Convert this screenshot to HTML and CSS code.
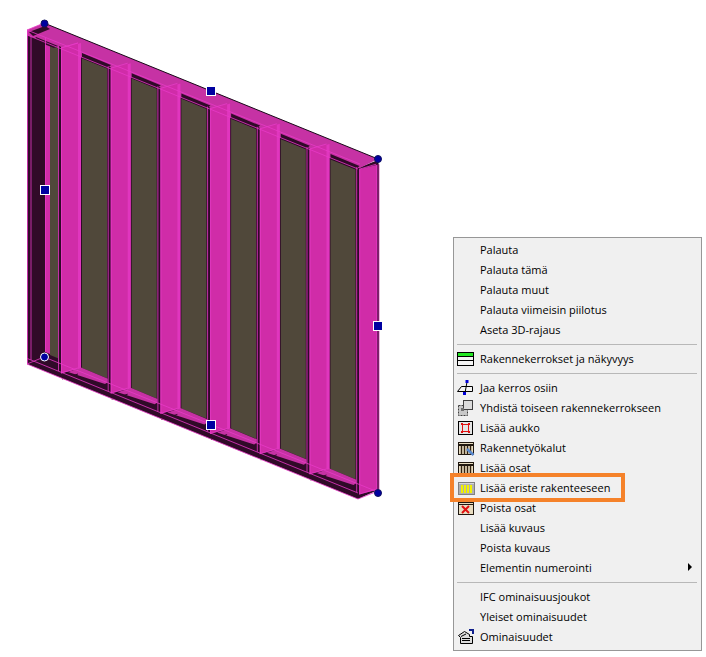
FILE: index.html
```html
<!DOCTYPE html>
<html lang="en">
<head>
  <meta charset="UTF-8" />
  <title>Rakenne</title>
  <link rel="stylesheet" href="styles.css">
</head>
<body>
  <div class="stage">
    <svg class="model" width="400" height="510" viewBox="0 0 400 510">
      <defs>
        <g id="stud">
          <polygon class="dark" points="58,46 61,47 61,374 58,372"/>
          <polygon class="pink" points="61,48 81,43 81,368 61,373"/>
          <polygon class="pink-hi" points="78,44 81,43 81,368 78,369"/>
          <path class="line" d="M58.5 46V371M61.5 48V373M61 48L78 43M61 373L78 368"/>
        </g>
        <g id="bay">
          <polygon class="brown" points="82,58 107,68.2 107,378.2 82,368"/>
          <polygon class="dark" points="82,53 111,65 107,68.5 82,58.4"/>
          <polygon class="pink-low" points="81,367.6 111,380 105,384 68,372"/>
          <path class="line-dark" d="M62 379L78 374"/>
          <use href="#stud"/>
        </g>
      </defs>

      <!-- wall body -->
      <polygon class="dark" points="27,33 358,168 378,160 378,490 358,499 27,364"/>
      <polygon class="pink-low" points="44,23 378,159 358,169 27,35 27,30"/>
      <polygon class="dark" points="29,32 45,26 50,29 33,36"/>

      <!-- left end -->
      <polygon class="pink" points="45,38 50,40 50,354 45,352"/>
      <polygon class="brown" points="50,45 58,48.2 58,358.2 50,355"/>
      <polygon class="dark" points="36,37 58,46 54,48 34,40"/>

      <!-- bays -->
      <use href="#stud"/>
      <use href="#bay"/>
      <use href="#bay" x="49.7" y="20.2"/>
      <use href="#bay" x="99.4" y="40.4"/>
      <use href="#bay" x="149.1" y="60.6"/>
      <use href="#bay" x="198.8" y="80.8"/>
      <use href="#bay" x="248.5" y="101"/>
      <use href="#stud" x="298.2" y="121.2"/>

      <!-- plate edges -->
      <path class="line" d="M27.5 30V364M31 36V360M45.5 38V352"/>
      <path class="line" d="M27 30L44 23M27 35L358 169M27 30L360 164"/>
      <path class="line" d="M27 364L358 499L378 491M27 358.4L358 493M27 364L44 357M44 357L378 492"/>
      <path class="edge" d="M44 23L378 159V491"/>

      <!-- grips -->
      <circle class="grip" cx="44.5" cy="23.5" r="3.5"/>
      <circle class="grip" cx="378" cy="159" r="3.5"/>
      <circle class="grip grip-ring" cx="44.5" cy="357" r="4"/>
      <circle class="grip" cx="378" cy="493" r="3.5"/>
      <rect class="grip grip-ring" x="40.5" y="185.5" width="9" height="9"/>
      <rect class="grip grip-ring" x="206.5" y="86.5" width="9" height="9"/>
      <rect class="grip grip-ring" x="373.5" y="321.5" width="9" height="9"/>
      <rect class="grip grip-ring" x="206.5" y="420.5" width="9" height="9"/>
    </svg>

    <div class="menu">
      <div class="item"><span class="slot"></span>Palauta</div>
      <div class="item"><span class="slot"></span>Palauta tämä</div>
      <div class="item"><span class="slot"></span>Palauta muut</div>
      <div class="item"><span class="slot"></span>Palauta viimeisin piilotus</div>
      <div class="item"><span class="slot"></span>Aseta 3D-rajaus</div>
      <div class="sep"></div>
      <div class="item">
        <span class="slot">
          <svg width="18" height="16" viewBox="0 0 18 16">
            <rect x="0" y="1" width="17" height="14" fill="#000"/>
            <rect x="1" y="2" width="15" height="3" fill="#22e622"/>
            <rect x="1" y="6" width="15" height="8" fill="#f4f4f4"/>
            <rect x="1" y="9" width="15" height="1" fill="#000"/>
          </svg>
        </span>Rakennekerrokset ja näkyvyys
      </div>
      <div class="sep"></div>
      <div class="item">
        <span class="slot">
          <svg width="18" height="18" viewBox="0 0 18 18">
            <path d="M0.5 12.5L4.5 7.5H15.5V12.5Z" fill="#f4f4f4" stroke="#000"/>
            <path d="M10 3L8 14" fill="none" stroke="#000"/>
            <rect x="8.5" y="1" width="3" height="3" fill="#0000d8"/>
            <rect x="6" y="13" width="3" height="3" fill="#0000d8"/>
          </svg>
        </span>Jaa kerros osiin
      </div>
      <div class="item">
        <span class="slot">
          <svg width="18" height="18" viewBox="0 0 18 18">
            <rect x="1.5" y="6.5" width="9" height="10" fill="#c8c8c8" stroke="#404040" stroke-dasharray="2 1"/>
            <rect x="6.5" y="1.5" width="9" height="9" fill="#dcdcdc" stroke="#404040"/>
            <rect x="4" y="9" width="3" height="3" fill="#707070"/>
          </svg>
        </span>Yhdistä toiseen rakennekerrokseen
      </div>
      <div class="item">
        <span class="slot">
          <svg width="18" height="18" viewBox="0 0 18 18">
            <rect x="1.5" y="2.5" width="14" height="13" fill="#e4e4e4" stroke="#000"/>
            <rect x="5.5" y="5.5" width="6" height="7" fill="none" stroke="#e01010"/>
            <path d="M4 4h2v2H4zM11 4h2v2h-2zM4 12h2v2H4zM11 12h2v2h-2z" fill="#e01010"/>
          </svg>
        </span>Lisää aukko
      </div>
      <div class="item">
        <span class="slot">
          <svg width="18" height="18" viewBox="0 0 18 18">
            <rect x="1.5" y="3.5" width="15" height="12" fill="#e8dcc0" stroke="#201810"/>
            <rect x="2" y="5" width="14" height="2" fill="#201810"/>
            <path d="M4.5 7V15M7.5 7V15M10.5 7V15M13.5 7V15" stroke="#302010" stroke-width="1.4"/>
            <path d="M10 10L16.5 16" stroke="#5a8ad0" stroke-width="2.5"/>
          </svg>
        </span>Rakennetyökalut
      </div>
      <div class="item">
        <span class="slot">
          <svg width="18" height="18" viewBox="0 0 18 18">
            <rect x="1.5" y="3.5" width="15" height="12" fill="#e8dcc0" stroke="#201810"/>
            <rect x="2" y="5" width="14" height="2" fill="#201810"/>
            <path d="M4.5 7V15M7.5 7V15M10.5 7V15M13.5 7V15" stroke="#302010" stroke-width="1.4"/>
          </svg>
        </span>Lisää osat
      </div>
      <div class="item">
        <span class="slot">
          <svg width="18" height="18" viewBox="0 0 18 18">
            <rect x="1.5" y="3.5" width="16" height="12" fill="#b0b0b0" stroke="#808080"/>
            <rect x="2" y="4" width="15" height="1" fill="#d8d8d8"/>
            <path d="M4 6h2v8H4zM7 6h2v8H7zM10 6h2v8h-2zM13 6h2v8h-2z" fill="#f2f200"/>
          </svg>
        </span>Lisää eriste rakenteeseen
        <span class="marker"></span>
      </div>
      <div class="item">
        <span class="slot">
          <svg width="18" height="18" viewBox="0 0 18 18">
            <rect x="1.5" y="3.5" width="15" height="12" fill="#e8dcc0" stroke="#201810"/>
            <rect x="2" y="5" width="14" height="1" fill="#201810"/>
            <path d="M5 7L12 14M12 7L5 14" stroke="#e01010" stroke-width="2"/>
          </svg>
        </span>Poista osat
      </div>
      <div class="item"><span class="slot"></span>Lisää kuvaus</div>
      <div class="item"><span class="slot"></span>Poista kuvaus</div>
      <div class="item"><span class="slot"></span>Elementin numerointi<span class="arrow"></span></div>
      <div class="sep"></div>
      <div class="item"><span class="slot"></span>IFC ominaisuusjoukot</div>
      <div class="item"><span class="slot"></span>Yleiset ominaisuudet</div>
      <div class="item">
        <span class="slot">
          <svg width="18" height="18" viewBox="0 0 18 18">
            <path d="M1.5 7.5L7.5 3.5L12.5 6.5V8.5H15.5V15.5H3.5V9.5Z" fill="#dcdcdc" stroke="#000"/>
            <path d="M5 10.5H13M5 12.5H13M4 8.5L9 6" stroke="#000"/>
            <path d="M12 1h5v5h-2V3h-3z" fill="#10208c"/>
          </svg>
        </span>Ominaisuudet
      </div>
    </div>
  </div>
</body>
</html>
```

FILE: styles.css
```css
body {
  margin: 0;
  background: #fff;
}

.stage {
  position: relative;
  width: 706px;
  height: 657px;
  overflow: hidden;
}

.model {
  display: block;
}

.dark { fill: #300a28; }
.brown { fill: #50483a; }
.pink { fill: #d02ca8; }
.pink-hi { fill: #e036be; }
.pink-low { fill: #c632a4; }

.line {
  fill: none;
  stroke: #e83ac8;
  stroke-width: 0.8;
}

.line-dark {
  fill: none;
  stroke: #300a28;
  stroke-width: 1;
}

.edge {
  fill: none;
  stroke: #180818;
  stroke-width: 1;
}

.grip {
  fill: #0000a0;
  stroke: #101060;
}

.grip-ring {
  stroke: #fff;
  stroke-width: 1;
}

.menu {
  position: absolute;
  left: 453px;
  top: 237px;
  width: 247px;
  padding: 2px 0 3px;
  background: #f0f0f0;
  border: 1px solid #979797;
  box-sizing: content-box;
  font-family: "Open Sans", "Liberation Sans", sans-serif;
  font-size: 11px;
  color: #000;
}

.item {
  position: relative;
  display: flex;
  align-items: center;
  box-sizing: border-box;
  height: 20px;
  padding-bottom: 1px;
}

.slot {
  display: flex;
  align-items: center;
  flex: none;
  width: 26px;
  height: 20px;
  padding-left: 3px;
  margin-right: -3px;
  margin-bottom: -1px;
}

.sep {
  height: 1px;
  margin: 4px 4px 4px 3px;
  background: #b8b8b8;
}

.arrow {
  position: absolute;
  right: 9px;
  top: 5px;
  border-left: 4px solid #000;
  border-top: 4px solid transparent;
  border-bottom: 4px solid transparent;
}

.marker {
  position: absolute;
  left: -4px;
  top: -5px;
  width: 167px;
  height: 21px;
  border: 4px solid #f5822a;
}
```
